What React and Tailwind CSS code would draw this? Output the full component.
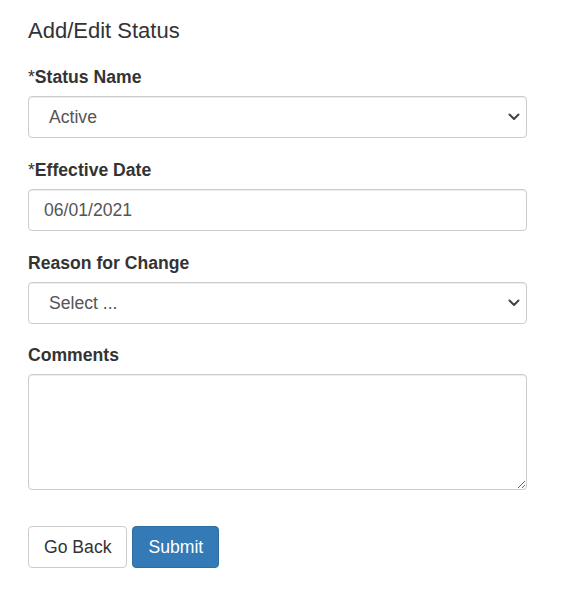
import { useState } from 'react'

const font = { fontFamily: '"Liberation Sans", Arial, sans-serif' }

function Label({ children, required }) {
  return (
    <label className="block text-[17.6px] leading-[22px] font-bold text-[#333] mb-[8px]">
      {required && <span className="font-normal">*</span>}
      {children}
    </label>
  )
}

function Chevron() {
  return (
    <svg className="absolute right-[7px] top-1/2 -translate-y-1/2 pointer-events-none" width="12" height="8" viewBox="0 0 12 8">
      <path d="M1.5 1.5 L6 6 L10.5 1.5" fill="none" stroke="#444" strokeWidth="2" strokeLinecap="round" strokeLinejoin="round" />
    </svg>
  )
}

export default function App() {
  const [status, setStatus] = useState('Active')
  const [date, setDate] = useState('06/01/2021')
  const [reason, setReason] = useState('')
  const [comments, setComments] = useState('')

  const field = 'block w-full h-[42px] bg-white border border-[#ccc] rounded-[4px] text-[17.6px] text-[#555] shadow-[inset_0_1px_1px_rgba(0,0,0,0.075)] outline-none'

  return (
    <div className="bg-white min-h-[607px] pl-[28px] pt-[17px] w-[499px] box-content" style={font}>
      <h4 className="text-[22px] leading-[28px] text-[#333] mb-[21px]">Add/Edit Status</h4>

      <div className="mb-[21px]">
        <Label required>Status Name</Label>
        <div className="relative">
          <select value={status} onChange={e => setStatus(e.target.value)} className={`${field} appearance-none pl-[20px] pr-[30px]`}>
            <option>Active</option>
            <option>Inactive</option>
          </select>
          <Chevron />
        </div>
      </div>

      <div className="mb-[21px]">
        <Label required>Effective Date</Label>
        <input value={date} onChange={e => setDate(e.target.value)} className={`${field} px-[15px]`} />
      </div>

      <div className="mb-[20px]">
        <Label>Reason for Change</Label>
        <div className="relative">
          <select value={reason} onChange={e => setReason(e.target.value)} className={`${field} appearance-none pl-[20px] pr-[30px]`}>
            <option value="">Select ...</option>
            <option value="1">Promotion</option>
            <option value="2">Leave</option>
          </select>
          <Chevron />
        </div>
      </div>

      <div className="mb-[36px]">
        <Label>Comments</Label>
        <textarea value={comments} onChange={e => setComments(e.target.value)} className={`${field} h-[116px] px-[15px] py-[7px]`} />
      </div>

      <div className="flex gap-[5px]">
        <button className="h-[42px] px-[15px] bg-white border border-[#ccc] rounded-[4px] text-[17.6px] text-[#333]">Go Back</button>
        <button className="h-[42px] px-[15px] bg-[#337ab7] border border-[#2e6da4] rounded-[4px] text-[17.6px] text-white">Submit</button>
      </div>
    </div>
  )
}
